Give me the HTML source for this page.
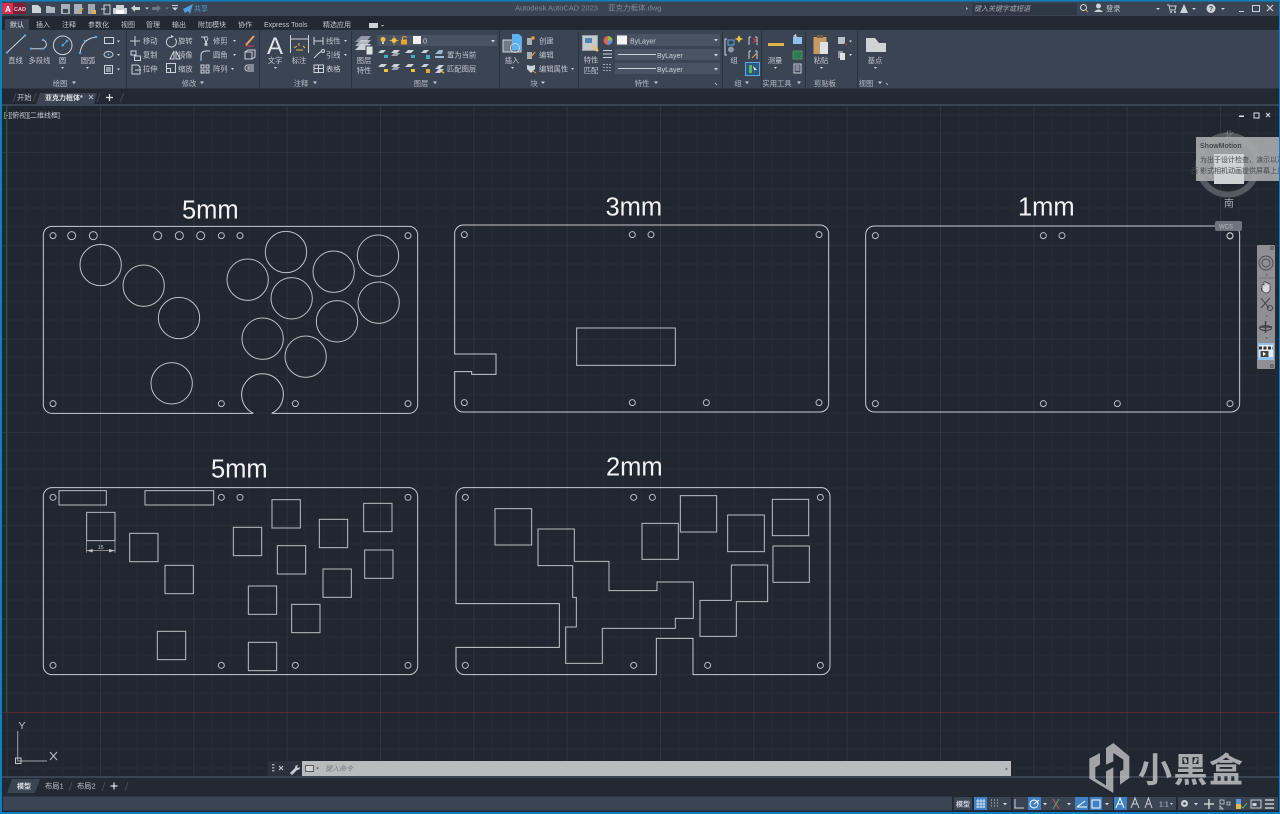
<!DOCTYPE html>
<html><head><meta charset="utf-8"><style>
html,body{margin:0;padding:0;background:#212730;overflow:hidden}
svg{display:block;filter:blur(.35px)}
text{font-family:"Liberation Sans","Noto Sans CJK SC",sans-serif}
.t{font-size:7.3px;fill:#c3c8cf}
.m{text-anchor:middle}
.b{font-size:7.3px;fill:#b5bbc3}
.i{fill:none;stroke:#cdd2d8;stroke-width:1}
.f{fill:#cdd2d8}
.p{fill:none;stroke:#c8cacd;stroke-width:3}
.h{fill:none;stroke:#bcbfc2;stroke-width:3}
.big{font-size:25.5px;fill:#f2f3f4}
.d{fill:#4a5363}
.u{fill:#5aa9e6}
</style></head><body>
<svg xmlns="http://www.w3.org/2000/svg" width="1280" height="814" viewBox="0 0 1280 814">
<defs>
<pattern id="g" width="93.333" height="93.333" patternUnits="userSpaceOnUse" patternTransform="translate(6.67,58.6)">
<rect width="93.333" height="93.333" fill="#212730"/>
<path d="M18.67 0V93.3M37.33 0V93.3M56 0V93.3M74.67 0V93.3M0 18.67H93.3M0 37.33H93.3M0 56H93.3M0 74.67H93.3" stroke="#262c35" stroke-width="1"/>
<path d="M.5 0V93.3M0 .5H93.3" stroke="#2e3540" stroke-width="1"/>
</pattern>
</defs>

<rect width="1280" height="814" fill="#212730"/>
<rect x="0" y="104" width="1280" height="675" fill="url(#g)"/>
<path d="M6.5 106V712" stroke="#2c5a3c"/>
<path d="M6 712.5H1280" stroke="#59292d"/>

<!-- title bar -->
<rect width="1280" height="16" fill="#3b4453"/>
<rect width="1280" height="1.5" fill="#0f7fbf"/>
<rect x="2" y="3" width="24" height="11" fill="#7c1f38"/>
<rect x="2" y="3" width="11" height="11" fill="#d8304f"/>
<text x="5" y="12" style="font-size:8px;font-weight:bold" fill="#fff">A</text>
<text x="14" y="11" style="font-size:5.5px;font-weight:bold" fill="#e9c9d0">CAD</text>
<path class="f" d="M32 5h6l3 3v5h-9z"/>
<path class="f" fill-opacity=".8" d="M46 6h4l1 1h4v6h-9z"/>
<path class="f" d="M61 4h9v10h-9z" opacity=".75"/><rect x="63" y="9" width="5" height="4" fill="#3b4453"/>
<path class="f" d="M74 4h8v10h-8z" opacity=".75"/><path d="M79 13l4-5" stroke="#e0a040" stroke-width="1.5"/>
<path class="f" d="M88 4h7v10h-7z" opacity=".7"/><rect x="92" y="10" width="4" height="4" fill="#e0b050"/>
<path class="i" d="M104 5h6v9h-6zM101 9h5"/>
<path class="f" d="M116 5h8v3h3v6h-14v-6h3z"/><rect x="116" y="10" width="8" height="4" fill="#fff"/>
<path class="f" d="M131 8l4-3v2h5v3h-5v2z"/>
<path d="M145 7.500l2 2 2-2z" class="f"/>
<path fill="#6d7582" d="M161 8l-4-3v2h-5v3h5v2z"/>
<path d="M165 7.500l2 2 2-2z" fill="#6d7582"/>
<path class="f" d="M172 5h6v1h-6zM172 7.500h6l-3 3z"/>
<path fill="#4d9fd8" d="M183 9l10-5-3 10-2-3-3 2z"/>
<text x="194" y="11" style="font-size:7px" fill="#4d9fd8">共享</text>
<text x="515" y="10.500" style="font-size:7.500px" fill="#808997">Autodesk AutoCAD 2023</text>
<text x="608" y="10.500" style="font-size:7.500px" fill="#808997">亚克力框体.dwg</text>
<path d="M966 7l2 1.500-2 1.500z" fill="#aeb4bc"/>
<rect x="972" y="3" width="105" height="12" fill="#303845"/>
<text x="974" y="11" style="font-size:7px;font-style:italic" fill="#a6acb5">键入关键字或短语</text>
<circle cx="1083.500" cy="7.500" r="3" class="i"/><path d="M1086 10l2 2" stroke="#d09a40"/>
<circle cx="1098.500" cy="6" r="2.500" class="f"/><path class="f" d="M1094 12q4.500-5 9 0z"/>
<text x="1106" y="11" class="t">登录</text>
<path d="M1156 8l2 2 2-2z" class="f"/>
<path class="i" d="M1167 5h2l1 5h5l1-4h-6"/><circle cx="1171" cy="12" r="1" class="f"/><circle cx="1175" cy="12" r="1" class="f"/>
<path class="f" d="M1184 4l4 9h-8z"/><path d="M1192 8l2 2 2-2zM1221 8l2 2 2-2z" class="f"/>
<circle cx="1211" cy="8.500" r="4.500" class="f"/><text x="1211" y="11" class="m" style="font-size:7px;font-weight:bold" fill="#3b4453">?</text>
<path class="f" d="M1239 11h5v1h-5z"/><rect x="1252.500" y="5.500" width="7" height="6" class="i"/>
<path d="M1267 5l6 6M1273 5l-6 6" stroke="#cdd2d8" stroke-width="1.200"/>

<!-- tabs row -->
<rect y="16" width="1280" height="14" fill="#222933"/>
<path d="M5 30V19h24v11z" fill="#3b4453"/>
<g class="t" style="font-size:7px">
<text x="10" y="27" fill="#e0e3e6">默认</text><text x="36" y="27">插入</text><text x="62" y="27">注释</text><text x="88" y="27">参数化</text><text x="121" y="27">视图</text><text x="146" y="27">管理</text><text x="172" y="27">输出</text><text x="198" y="27">附加模块</text><text x="238" y="27">协作</text><text x="264" y="27">Express Tools</text><text x="323" y="27">精选应用</text>
</g>
<rect x="369" y="23" width="9" height="5" fill="#cdd2d8"/><path d="M381 25l1.500 1.500 1.500-1.500z" class="f"/>

<!-- ribbon -->
<rect y="30" width="1280" height="58.500" fill="#3b4453"/>
<path d="M126.500 31V88M259.500 31V88M351.500 31V88M499.500 31V88M578.500 31V88M722.500 31V88M761.500 31V88M805.500 31V88M857.500 31V88" stroke="#2a313c"/>

<!-- draw -->
<path class="i" d="M7 52.500L25 35.500"/><circle cx="7" cy="52.500" r="1.200" class="u"/><circle cx="25" cy="35.500" r="1.200" class="u"/>
<path class="i" d="M31 48.700H42.700a4.400 4.400 0 0 0 0-8.700"/><circle cx="31" cy="48.700" r="1.200" class="u"/><circle cx="43" cy="48.700" r="1.200" class="u"/><circle cx="43" cy="40" r="1.200" class="u"/>
<circle cx="62.700" cy="45.300" r="9.300" class="i"/><path d="M62.700 45.300l4-4" stroke="#5aa9e6"/><circle cx="62.700" cy="45.300" r="1.200" class="u"/><circle cx="67" cy="41" r="1.200" class="u"/>
<path class="i" d="M80 53q2-14 16-16"/><circle cx="80" cy="53" r="1.200" class="u"/><circle cx="85" cy="41" r="1.200" class="u"/><circle cx="96" cy="37" r="1.200" class="u"/>
<rect x="104.500" y="37.500" width="9" height="6" class="i"/>
<ellipse cx="108.500" cy="54.500" rx="4.500" ry="3" class="i"/><circle cx="108.500" cy="54.500" r="1" class="u"/>
<rect x="104.500" y="65.500" width="8" height="8" class="i"/><rect x="106" y="67" width="5" height="5" fill="#8e98a5"/>
<path class="f" d="M117 40.500l3 0-1.500 2zM117 54l3 0-1.500 2zM117 68.500l3 0-1.500 2zM61 67l3 0-1.500 2zM86 67l3 0-1.500 2z"/>
<text x="15.500" y="63" class="t m">直线</text><text x="39.500" y="63" class="t m">多段线</text><text x="62.500" y="63" class="t m">圆</text><text x="88" y="63" class="t m">圆弧</text>
<text x="60" y="86" class="b m">绘图</text><path class="f" d="M72 81.500h4l-2 2.500z"/>

<!-- modify -->
<path class="i" d="M135 36v10M130 41h10"/><path class="i" d="M132 44a0 0 0 0 0 0 0"/>
<text x="143" y="43.500" class="t">移动</text><text x="143" y="57.500" class="t">复制</text><text x="143" y="71.500" class="t">拉伸</text>
<rect x="131" y="51" width="5" height="4" class="i"/><rect x="134.500" y="56" width="6" height="4.500" class="i"/>
<path class="i" d="M132 65h6l2 2v7h-8zM135 70h6"/>
<path class="i" d="M172 37a5 5 0 1 0 3 1.500"/><path class="f" d="M171 35l3 1.500-3 1.500z"/>
<path class="i" d="M170 59l4-8v8zM176 51l4 8h-4z"/>
<rect x="166.500" y="63.500" width="9" height="9" class="i"/><rect x="166.500" y="68.500" width="4" height="4" class="i"/>
<text x="178" y="43.500" class="t">旋转</text><text x="178" y="57.500" class="t">镜像</text><text x="178" y="71.500" class="t">缩放</text>
<path class="i" d="M201 37h7M204 37l3 9M208 38l-3 8"/><circle cx="206" cy="44" r="1.500" class="f"/>
<path class="i" d="M201 60v-4q0-5 5-5h4"/><circle cx="201" cy="60" r="1" class="u"/>
<path class="i" d="M201 65h3v3h-3zM206 65h3v3h-3zM201 70h3v3h-3zM206 70h3v3h-3z"/>
<text x="213" y="43.500" class="t">修剪</text><text x="213" y="57.500" class="t">圆角</text><text x="213" y="71.500" class="t">阵列</text>
<path class="f" d="M233 40h3l-1.500 2zM233 54h3l-1.500 2zM231 68h3l-1.500 2z"/>
<path d="M246 45l8-9" stroke="#e9a26a" stroke-width="2"/><path d="M245 46h9" stroke="#c9404a"/>
<path class="i" d="M245 52h7v7h-7zM245 52l3-2h7v7l-3 2"/>
<path class="i" d="M254 65h-6q-3 0-3 3t3 3h6M254 67h-6v2h6"/>
<text x="189" y="86" class="b m">修改</text><path class="f" d="M200 81.500h4l-2 2.500z"/>

<!-- annotation -->
<text x="275" y="54" class="m" style="font-size:24px" fill="#e1e4e7">A</text>
<text x="275" y="63" class="t m">文字</text><path class="f" d="M274 67h3l-1.500 2z"/>
<path class="i" d="M290.500 35v18M308.500 35v18M291 39h17"/><path d="M294 48l3-2M299 43v3M303 46l2 2M296 50h7" stroke="#e6b84a"/>
<text x="299" y="63" class="t m">标注</text>
<path class="i" d="M314 37v8M323 37v8M314 41h9"/>
<path class="i" d="M314 58l4-4q2-2 4-3"/><circle cx="323" cy="51" r="1.500" class="i"/>
<rect x="314" y="65" width="9.500" height="7.500" class="i"/><path class="i" d="M314 68.500h9M318.500 65v7"/>
<text x="326" y="43.500" class="t">线性</text><text x="326" y="57.500" class="t">引线</text><text x="326" y="71.500" class="t">表格</text>
<path class="f" d="M344 40h3l-1.500 2zM344 54h3l-1.500 2z"/>
<text x="301" y="86" class="b m">注释</text><path class="f" d="M313 81.500h4l-2 2.500z"/>

<!-- layer -->
<path class="f" d="M355 42l6-6h10l-5 6z" opacity=".6"/><path class="f" d="M355 46l6-6h10l-5 6z" opacity=".8"/><path class="f" d="M355 50l6-6h10l-5 6z"/>
<rect x="366" y="46" width="7" height="9" fill="#dfe2e5" stroke="#3b4453"/>
<text x="364" y="63" class="t m">图层</text><text x="364" y="73" class="t m">特性</text>
<rect x="377" y="35" width="120" height="11" class="d"/>
<circle cx="383" cy="39.500" r="2.500" fill="#f0c040"/><rect x="382" y="42" width="2" height="2" fill="#ccc"/>
<circle cx="394" cy="40.500" r="2.500" fill="#f0c040"/><path d="M394 36v9M389.500 40.500h9" stroke="#f0c040" stroke-width=".7"/>
<rect x="401" y="39.500" width="6" height="5" fill="#e6a72e"/><path d="M402.500 39.500v-2q2-2 4 0" fill="none" stroke="#e6a72e"/>
<rect x="413" y="36" width="8" height="8" fill="#eef0f2"/>
<text x="423" y="43.500" style="font-size:7.500px" fill="#cdd2d8">0</text>
<path class="f" d="M491 40h4l-2 2.500z"/>
<g fill="#cdd2d8">
<path d="M378 53l3-3h5l-3 3zM391 53l3-3h6l-3 3zM405 53l3-3h6l-3 3zM378 67l3-3h6l-3 3zM391 67l3-3h6l-3 3zM405 67l3-3h6l-3 3z"/>
<path d="M391 56l3-3h6l-3 3zM391 70l3-3h6l-3 3z" opacity=".7"/>
</g>
<path d="M421 53l3-3h5l-3 3zM421 67l3-3h5l-3 3z" fill="#cdd2d8"/>
<rect x="384" y="55" width="4" height="3" fill="#3fb3c4"/><rect x="411" y="55" width="4" height="3" fill="#3fb3c4"/><rect x="384" y="69" width="4" height="3" fill="#f0c040"/><rect x="411" y="69" width="4" height="3" fill="#f0c040"/><rect x="426" y="55" width="4" height="4" fill="#3fb3c4"/><rect x="426" y="69" width="4" height="4" fill="#e6a72e"/>
<path d="M435 54l4-4h4l-1 4zM435 58h9v-2h-9z" fill="#9fb8d0"/>
<path d="M435 69l4-4h5l-4 4zM435 73l4-4h5l-4 4z" fill="#cdd2d8"/><path d="M441 71l3 2" stroke="#e6b84a" stroke-width="1.500"/>
<text x="447" y="57.500" class="t">置为当前</text><text x="447" y="71.500" class="t">匹配图层</text>
<text x="421" y="86" class="b m">图层</text><path class="f" d="M433 81.500h4l-2 2.500z"/>

<!-- block -->
<rect x="503" y="40" width="18" height="12" fill="#717b88" stroke="#cdd2d8"/>
<path d="M512 34h7l3 3v13h-10z" fill="#5db0ee"/>
<circle cx="515" cy="48" r="4.500" fill="none" stroke="#cdd2d8"/>
<text x="512" y="63" class="t m">插入</text><path class="f" d="M511 67h3l-1.500 2z"/>
<path class="f" d="M527 38h5v7h-5z" opacity=".75"/><circle cx="533" cy="38" r="1.800" fill="#e6a040"/>
<path class="f" d="M527 52h5v7h-5z" opacity=".75"/><path d="M530 58l5-6" stroke="#e6a040" stroke-width="1.200"/>
<path class="f" d="M527 65l4 1 4-1v4l-4 4-4-4z"/><path d="M533 71l3 2" stroke="#e6a040"/>
<text x="539" y="43.500" class="t">创建</text><text x="539" y="57.500" class="t">编辑</text><text x="539" y="71.500" class="t">编辑属性</text>
<path class="f" d="M571 68h3l-1.500 2z"/>
<text x="534" y="86" class="b m">块</text><path class="f" d="M541 81.500h4l-2 2.500z"/>

<!-- properties -->
<rect x="582.500" y="35.500" width="15" height="15" fill="#c5c9ce" stroke="#9aa0a8"/>
<rect x="585" y="38" width="7" height="5" fill="#4a84b8"/>
<path d="M592 46l6 5" stroke="#e6c27a" stroke-width="2.500"/>
<text x="591" y="62.500" class="t m">特性</text><text x="591" y="73" class="t m">匹配</text>
<circle cx="608" cy="40.500" r="4.500" fill="#d86a50"/><path d="M608 36a4.500 4.500 0 0 1 4.500 4.500H608z" fill="#8fbf4a"/><path d="M608 45a4.500 4.500 0 0 0 4.500-4.500H608z" fill="#5f8fd8"/>
<path d="M603 50.500h9M603 54h9M603 57.500h9" stroke="#cdd2d8"/><path d="M603 64.500h9M603 67.500h9M603 70.500h9" stroke="#98a0aa" stroke-dasharray="2 1"/>
<rect x="615" y="34" width="105" height="12" class="d"/><rect x="617" y="35.500" width="10" height="9" fill="#f4f5f6"/>
<text x="630" y="43.500" style="font-size:7px" fill="#cdd2d8">ByLayer</text>
<rect x="615" y="49" width="105" height="11" class="d"/><path d="M618 54.500h38" stroke="#cdd2d8"/><text x="657" y="58" style="font-size:7px" fill="#cdd2d8">ByLayer</text>
<rect x="615" y="63" width="105" height="11" class="d"/><path d="M618 68.500h38" stroke="#cdd2d8"/><text x="657" y="72" style="font-size:7px" fill="#cdd2d8">ByLayer</text>
<path class="f" d="M714 39h4l-2 2.500zM714 54h4l-2 2.500zM714 68h4l-2 2.500z"/>
<text x="642" y="86" class="b m">特性</text><path class="f" d="M654 81.500h4l-2 2.500z"/><path d="M715 83l2 2" stroke="#aeb4bc"/>

<!-- group -->
<path class="i" d="M727 39h-2v16h2M734 39h0"/>
<rect x="728" y="40" width="6" height="5" fill="none" stroke="#5aa9e6"/><circle cx="731" cy="49.500" r="3" fill="#8d96a2"/>
<path d="M739 35l1.500 3 3 1-3 1-1.500 3-1.500-3-3-1 3-1z" fill="#f0c040"/>
<path class="i" d="M749 37v8M749 37h2M757 37v8M755 37h2"/><path d="M753 38l4 5M757 38l-4 5" stroke="#d04040"/>
<path class="i" d="M749 51v8M749 51h2M757 51v8M755 51h2"/><path d="M752 58l5-5" stroke="#e6a040"/>
<rect x="745.500" y="62.500" width="14" height="13" fill="#2d5a7a" stroke="#5aa9e6"/><path d="M749 65v8h3v-8z" fill="#59b36a"/><path d="M753 66l4 4h-3l1 3" fill="#eee"/>
<text x="734" y="63" class="t m">组</text>
<text x="738" y="86" class="b m">组</text><path class="f" d="M745 81.500h4l-2 2.500z"/>

<!-- utils -->
<rect x="768" y="43" width="16" height="3" fill="#e0b44a"/>
<text x="775" y="63" class="t m">测量</text><path class="f" d="M774 67h3l-1.500 2z"/>
<rect x="793" y="37" width="9" height="7" fill="#8fc3ec"/><path class="f" d="M793 36l3-2 1 4z"/>
<rect x="793" y="51" width="9" height="8" fill="#2f7a52" stroke="#59b36a" stroke-width=".6"/>
<rect x="794" y="64" width="7" height="9" fill="none" stroke="#cdd2d8"/><path d="M795.500 66h4M795.500 68h4M795.500 70h4" stroke="#cdd2d8"/>
<text x="777" y="86" class="b m">实用工具</text><path class="f" d="M797 81.500h4l-2 2.500z"/>

<!-- clipboard -->
<rect x="813.500" y="37" width="13" height="17" fill="#c79a64"/><rect x="817" y="35" width="6" height="3" fill="#7a6040"/>
<path d="M820 42h8v12h-8z" fill="#dfe2e5"/>
<text x="821" y="63" class="t m">粘贴</text><path class="f" d="M820 67h3l-1.500 2z"/>
<rect x="838" y="37" width="7" height="7" fill="#b9bfc6"/><path d="M844 43l3 2" stroke="#d04040"/>
<rect x="838" y="51" width="5" height="7" fill="#8d96a2"/><rect x="840" y="53" width="5" height="7" fill="#dfe2e5"/>
<path class="f" d="M849 40.500h3l-1.500 2zM849 54h3l-1.500 2z"/>
<text x="825" y="86" class="b m">剪贴板</text>

<!-- view -->
<path d="M866 38h9l4 5h7v9h-20z" fill="#d0d3d6"/>
<text x="875" y="63" class="t m">基点</text><path class="f" d="M874 67h3l-1.500 2z"/>
<text x="866" y="86" class="b m">视图</text><path class="f" d="M878 81.500h4l-2 2.500z"/><path d="M886 83l2 2" stroke="#aeb4bc"/>

<!-- file tabs -->
<rect y="88.500" width="1280" height="15.500" fill="#222933"/>
<rect y="104" width="1280" height="2" fill="#3b4453"/>
<path d="M13 102l3-9M33 102l3-9M97 102l3-9M120 102l4-9" stroke="#434c5a" fill="none"/>
<path d="M36 104l4-11h57l-3 11z" fill="#3b4453"/>
<text x="17" y="100" class="t">开始</text>
<text x="45" y="100" style="font-size:7px;font-weight:bold" fill="#dfe2e5">亚克力框体*</text>
<path d="M89 95l4 4M93 95l-4 4" stroke="#aeb4bc"/>
<path d="M106 97.500h7M109.500 94v7" stroke="#dfe2e5" stroke-width="1.200"/>

<text x="4" y="117.500" style="font-size:7px" fill="#c5c9ce">[-][俯视][二维线框]</text>
<rect x="1239" y="115.500" width="5" height="1.500" fill="#dfe2e5"/><rect x="1254" y="113" width="5" height="5" fill="none" stroke="#dfe2e5"/>
<path d="M1266 113l4 4M1270 113l-4 4" stroke="#dfe2e5"/>

<!-- plate 1 -->
<g transform="translate(30,190) scale(.33333)">
<path class="p" d="M40 135a26 26 0 0 1 26-26H1137a26 26 0 0 1 26 26V644a26 26 0 0 1-26 26H725A62.500 62.500 0 1 0 670 670H66a26 26 0 0 1-26-26z"/>
<g class="h">
<circle cx="69" cy="137" r="9"/><circle cx="125" cy="137" r="12"/><circle cx="190" cy="137" r="12"/><circle cx="383" cy="137" r="12"/><circle cx="448" cy="137" r="12"/><circle cx="512" cy="137" r="12"/><circle cx="574" cy="137" r="9"/><circle cx="630" cy="137" r="9"/><circle cx="1134" cy="137" r="9"/><circle cx="69" cy="641" r="9"/><circle cx="574" cy="641" r="9"/><circle cx="796" cy="641" r="9"/><circle cx="1134" cy="641" r="9"/>
<circle cx="212" cy="225" r="62"/><circle cx="341" cy="287" r="62"/><circle cx="447" cy="384" r="62"/><circle cx="425" cy="580" r="62"/><circle cx="653" cy="269" r="62"/><circle cx="768" cy="186" r="62"/><circle cx="785" cy="325" r="62"/><circle cx="911" cy="245" r="62"/><circle cx="1044" cy="197" r="62"/><circle cx="1046" cy="338" r="62"/><circle cx="921" cy="394" r="62"/><circle cx="698" cy="446" r="62"/><circle cx="827" cy="500" r="62"/>
</g>
</g>
<text x="182" y="218.500" class="big">5mm</text>

<!-- plate 2 -->
<g transform="translate(30,450) scale(.33333)">
<rect class="p" x="40" y="113" width="1123" height="561" rx="26"/>
<g class="h">
<circle cx="69" cy="142" r="9"/><circle cx="574" cy="142" r="9"/><circle cx="630" cy="142" r="9"/><circle cx="1134" cy="142" r="9"/><circle cx="69" cy="646" r="9"/><circle cx="574" cy="646" r="9"/><circle cx="796" cy="646" r="9"/><circle cx="1134" cy="646" r="9"/>
<rect x="87" y="122" width="142" height="43"/><rect x="345" y="122" width="206" height="43"/>
<rect x="170" y="187" width="85" height="85"/><rect x="299" y="250" width="85" height="85"/><rect x="405" y="346" width="85" height="85"/><rect x="382" y="544" width="85" height="85"/><rect x="610" y="232" width="85" height="85"/><rect x="726" y="149" width="85" height="85"/><rect x="742" y="287" width="85" height="85"/><rect x="868" y="208" width="85" height="85"/><rect x="1001" y="160" width="85" height="85"/><rect x="1004" y="300" width="85" height="85"/><rect x="879" y="357" width="85" height="85"/><rect x="655" y="408" width="85" height="85"/><rect x="785" y="463" width="85" height="85"/><rect x="655" y="577" width="85" height="85"/>
</g>
<path d="M170 272v36M255 272v36M170 302H255" stroke="#c4c6c9" stroke-width="2"/>
<path d="M170 302l18-5v10zM255 302l-18-5v10z" fill="#c4c6c9"/>
<text x="212" y="297" class="m" style="font-size:16px" fill="#c4c6c9">15</text>
</g>
<text x="211" y="477.700" class="big">5mm</text>

<!-- plate 3 2mm -->
<g transform="translate(445,450) scale(.33333)">
<path class="p" d="M33 461V139a26 26 0 0 1 26-26H1129a26 26 0 0 1 26 26V648a26 26 0 0 1-26 26H744V565H634V674H59a26 26 0 0 1-26-26V592H343V461z"/>
<g class="h">
<circle cx="61" cy="142" r="9"/><circle cx="566" cy="142" r="9"/><circle cx="622" cy="142" r="9"/><circle cx="1126" cy="142" r="9"/><circle cx="61" cy="646" r="9"/><circle cx="566" cy="646" r="9"/><circle cx="788" cy="646" r="9"/><circle cx="1126" cy="646" r="9"/>
<rect x="150" y="176" width="110" height="109"/><rect x="591" y="220" width="109" height="108"/><rect x="706" y="137" width="109" height="109"/><rect x="848" y="195" width="110" height="110"/><rect x="982" y="148" width="109" height="109"/><rect x="984" y="288" width="109" height="109"/>
<path d="M279 237H388V334H492V422H636V396H745V505H691V535H472V640H362V531H394V442H383V347H279Z"/>
<path d="M765 451H859V345H968V455H874V559H765Z"/>
</g>
</g>
<text x="606" y="475.700" class="big">2mm</text>

<!-- plate 4 3mm -->
<g transform="translate(445,190) scale(.33333)">
<path class="p" d="M29 492V131a26 26 0 0 1 26-26H1125a26 26 0 0 1 26 26V640a26 26 0 0 1-26 26H55a26 26 0 0 1-26-26V545H80V553H153V492z"/>
<g class="h">
<circle cx="58" cy="134" r="9"/><circle cx="562" cy="134" r="9"/><circle cx="618" cy="134" r="9"/><circle cx="1122" cy="134" r="9"/><circle cx="58" cy="638" r="9"/><circle cx="562" cy="638" r="9"/><circle cx="784" cy="638" r="9"/><circle cx="1122" cy="638" r="9"/>
<rect x="395" y="414" width="296" height="112"/>
</g>
</g>
<text x="605.500" y="215.700" class="big">3mm</text>

<!-- plate 5 1mm -->
<g transform="translate(856,190) scale(.33333)">
<rect class="p" x="29" y="108" width="1122" height="558" rx="26"/>
<g class="h">
<circle cx="58" cy="137" r="9"/><circle cx="562" cy="137" r="9"/><circle cx="618" cy="137" r="9"/><circle cx="1122" cy="137" r="9"/><circle cx="58" cy="641" r="9"/><circle cx="562" cy="641" r="9"/><circle cx="784" cy="641" r="9"/><circle cx="1122" cy="641" r="9"/>
</g>
</g>
<text x="1018" y="215.700" class="big">1mm</text>

<!-- viewcube & tooltip -->
<circle cx="1228" cy="165" r="29.500" fill="none" stroke="#555a61" stroke-width="6"/>
<text x="1229" y="139" class="m" style="font-size:10px" fill="#7f848b">北</text>
<text x="1229" y="207" class="m" style="font-size:10px" fill="#a5a9ae">南</text>
<rect x="1196" y="137" width="84" height="44" fill="#a9abae" fill-opacity=".9"/>
<rect x="1214" y="154" width="30" height="30" fill="#cfd1d3"/>
<text x="1200" y="148" style="font-size:7px;font-weight:bold" fill="#45494f">ShowMotion</text>
<text x="1200" y="162" style="font-size:7px" fill="#45494f">为出于设计检查、演示以及</text>
<text x="1191" y="173" style="font-size:7px" fill="#45494f">西 影式相机动画提供屏幕上显</text>
<rect x="1215" y="221" width="27" height="10" rx="2" fill="#6f747c"/>
<text x="1226" y="228.500" class="m" style="font-size:6px" fill="#b9bdc2">WCS</text>
<circle cx="1230" cy="236" r="3" fill="none" stroke="#c4c6c9"/>

<!-- nav bar -->
<rect x="1257" y="245" width="18" height="124" rx="1.500" fill="#8e9093"/>
<circle cx="1272" cy="248" r="1.500" fill="none" stroke="#555"/><circle cx="1272" cy="366" r="1.500" fill="none" stroke="#555"/>
<circle cx="1266" cy="263" r="7" fill="none" stroke="#4a4d52"/><circle cx="1266" cy="263" r="4" fill="none" stroke="#4a4d52"/>
<path d="M1266 274.500l1.500 0-.7 1.500z" fill="#333"/>
<path d="M1258.500 278H1274" stroke="#777"/>
<path d="M1262 291v-6q1-1 2 0v-3q1-1 2 0v1q1-1 2 0v1q1-1 2 0v6q-1 3-4 3-3 0-5-5z" fill="#d8d9da" stroke="#3f4247" stroke-width=".8"/>
<path d="M1261 298l8 10M1270 298l-9 10" stroke="#3f4247"/><circle cx="1270" cy="308" r="2.500" fill="none" stroke="#3f4247"/>
<path d="M1266 315.500l1.500 0-.7 1.500zM1266 337.500l1.500 0-.7 1.500z" fill="#333"/>
<path d="M1265.500 321v12M1260 327h12" stroke="#3f4247" stroke-width="1.500"/><ellipse cx="1265.500" cy="328" rx="6" ry="2.500" fill="none" stroke="#3f4247"/>
<rect x="1258" y="343" width="16" height="17" fill="#8fc3ec"/>
<rect x="1259" y="345" width="14" height="12" fill="#e6edf3"/><path d="M1259 348h14" stroke="#333" stroke-dasharray="3 1.500" stroke-width="3"/><rect x="1260.500" y="351" width="8" height="6" fill="#444"/><path d="M1263 352l3 2-3 2z" fill="#fff"/>

<!-- UCS -->
<path d="M17.700 731V761H47" fill="none" stroke="#9fa3a8"/>
<rect x="15.500" y="758" width="5.500" height="5.500" fill="none" stroke="#c3c6ca"/>
<text x="22" y="729" class="m" style="font-size:10.500px" fill="#bfc2c6">Y</text>
<path d="M50 752l7 8M57 752l-7 8" stroke="#bfc2c6"/>

<!-- command -->
<rect x="268" y="761" width="34" height="15" fill="#2a313c"/>
<rect x="302" y="761" width="709" height="15" fill="#b9bcbf"/>
<path d="M272 764h2.500v1.500H272zM272 767h2.500v1.500H272zM272 770h2.500v1.500H272z" fill="#9aa0a8"/>
<path d="M279 766l4 4M283 766l-4 4" stroke="#c9ced4"/>
<path d="M290 773l5-5q0-3 3-3l-1 2 1 1 2-1q0 3-3 3l-5 5z" fill="#c9ced4"/>
<rect x="305" y="765" width="9" height="7" fill="#55595f"/><rect x="306" y="766" width="7" height="5" fill="#cfd1d3"/><path d="M316 767.500h3l-1.500 2z" fill="#55595f"/>
<text x="325" y="771" style="font-size:7px;font-style:italic" fill="#75797f">键入命令</text>
<path d="M1005 769.500h3l-1.500-2z" fill="#55595f"/>
<rect x="0" y="776" width="268" height="2" fill="#3b4453"/><rect x="268" y="776" width="1012" height="2" fill="#3b4453"/>

<!-- bottom tabs -->
<rect y="778" width="1280" height="18" fill="#222933"/>
<path d="M7 793l5-14h28l-5 14z" fill="#3b4453"/>
<text x="17" y="788.500" style="font-size:7px;font-weight:bold" fill="#dfe2e5">模型</text>
<text x="45" y="788.500" class="t">布局1</text><text x="77" y="788.500" class="t">布局2</text>
<path d="M69 791l3-9M102 791l3-9M125 791l3-9" stroke="#434c5a"/>
<path d="M110.500 786h7M114 782.500v7" stroke="#dfe2e5" stroke-width="1.200"/>

<!-- status -->
<rect y="796" width="1280" height="16" fill="#222933"/>
<rect x="3" y="796.500" width="949" height="14" fill="#3b4453"/>
<g fill="#3b4453">
<rect x="954" y="797" width="18" height="13"/><rect x="1013" y="797" width="64" height="13"/><rect x="974" y="797" width="37" height="13"/><rect x="1075" y="797" width="38" height="13"/><rect x="1114" y="797" width="62" height="13"/><rect x="1178" y="797" width="100" height="13"/>
</g>
<text x="956" y="806.500" style="font-size:7px;font-weight:bold" fill="#cdd2d8">模型</text>
<g fill="#3f82c4"><rect x="974" y="797" width="13" height="13"/><rect x="1028" y="797" width="13" height="13"/><rect x="1075" y="797" width="13" height="13"/><rect x="1090" y="797" width="12" height="13"/><rect x="1114" y="797" width="13" height="13"/></g>
<path d="M976 801h9M976 804h9M976 807h9M978 799v9M981 799v9M984 799v9" stroke="#eef1f4" stroke-width=".8"/>
<path d="M991 800h8M991 803h8M991 806h8" stroke="#cdd2d8" stroke-dasharray="1 2"/>
<path d="M1015 799v9h9" fill="none" stroke="#cdd2d8"/>
<circle cx="1034" cy="804" r="4" fill="none" stroke="#fff"/><path d="M1034 804l5-4" stroke="#fff"/>
<path d="M1053 799l6 10" stroke="#c85050"/><path d="M1059 799l-6 10" stroke="#58a860"/>
<path d="M1077 807h10M1077 807l8-6" stroke="#fff" fill="none"/>
<rect x="1092" y="800" width="8" height="8" fill="none" stroke="#fff"/>
<path d="M1116 808l4-10 4 10M1118 804h4" stroke="#fff" fill="none"/>
<path d="M1131 808l4-10 4 10M1133 804h4" stroke="#cdd2d8" fill="none"/>
<path d="M1145 808l3.500-10 3.500 10M1147 804h3" stroke="#cdd2d8" fill="none"/>
<text x="1159" y="806.500" style="font-size:7px" fill="#cdd2d8">1:1</text>
<circle cx="1184.500" cy="803.500" r="3.500" fill="#cdd2d8"/><circle cx="1184.500" cy="803.500" r="1.300" fill="#3b4453"/>
<path d="M1204 804h10M1209 799v10" stroke="#e2e5e8" stroke-width="1.300"/>
<path d="M1220 800h4v4h-4zM1227 802h3v3h-3zM1220 806l3 3h-3z" fill="none" stroke="#cdd2d8" stroke-width=".8"/>
<rect x="1236" y="799" width="5" height="5" fill="#5a9ad8"/><rect x="1236" y="804" width="5" height="5" fill="#e6b84a"/><path d="M1241 806l2 2 4-5" stroke="#59b36a" fill="none"/>
<rect x="1251" y="800" width="10" height="8" fill="none" stroke="#cdd2d8"/><rect x="1252.500" y="803" width="4" height="3" fill="#cdd2d8"/>
<path d="M1265 800h9M1265 804h9M1265 808h9" stroke="#e2e5e8" stroke-width="1.300"/>
<path class="f" d="M1003 803h4l-2 2.500zM1043 803h4l-2 2.500zM1067 803h4l-2 2.500zM1105 803h4l-2 2.500zM1170 803h3l-1.500 2zM1194 803h4l-2 2.500z"/>

<!-- blue border -->
<rect x="0" y="0" width="2" height="814" fill="#0f7fbf"/>
<rect x="1279" y="0" width="1" height="814" fill="#0f7fbf"/>
<rect x="0" y="812" width="1280" height="2" fill="#0f7fbf"/>

<!-- watermark -->
<g transform="translate(1080,738) scale(.33333)" fill="#c6c8c9" fill-opacity=".78">
<path d="M28 62L60 45V80L46 88V122L78 142V100L100 88V165L28 122Z"/>
<path d="M78 30L100 15L148 55V120L120 140V100L130 95V65L100 45V70L78 80Z"/>
</g>
<text x="1138" y="782" style="font-size:34px;font-weight:bold;letter-spacing:1.500px" fill="#c6c8c9" fill-opacity=".82">小黑盒</text>
</svg>
</body></html>
